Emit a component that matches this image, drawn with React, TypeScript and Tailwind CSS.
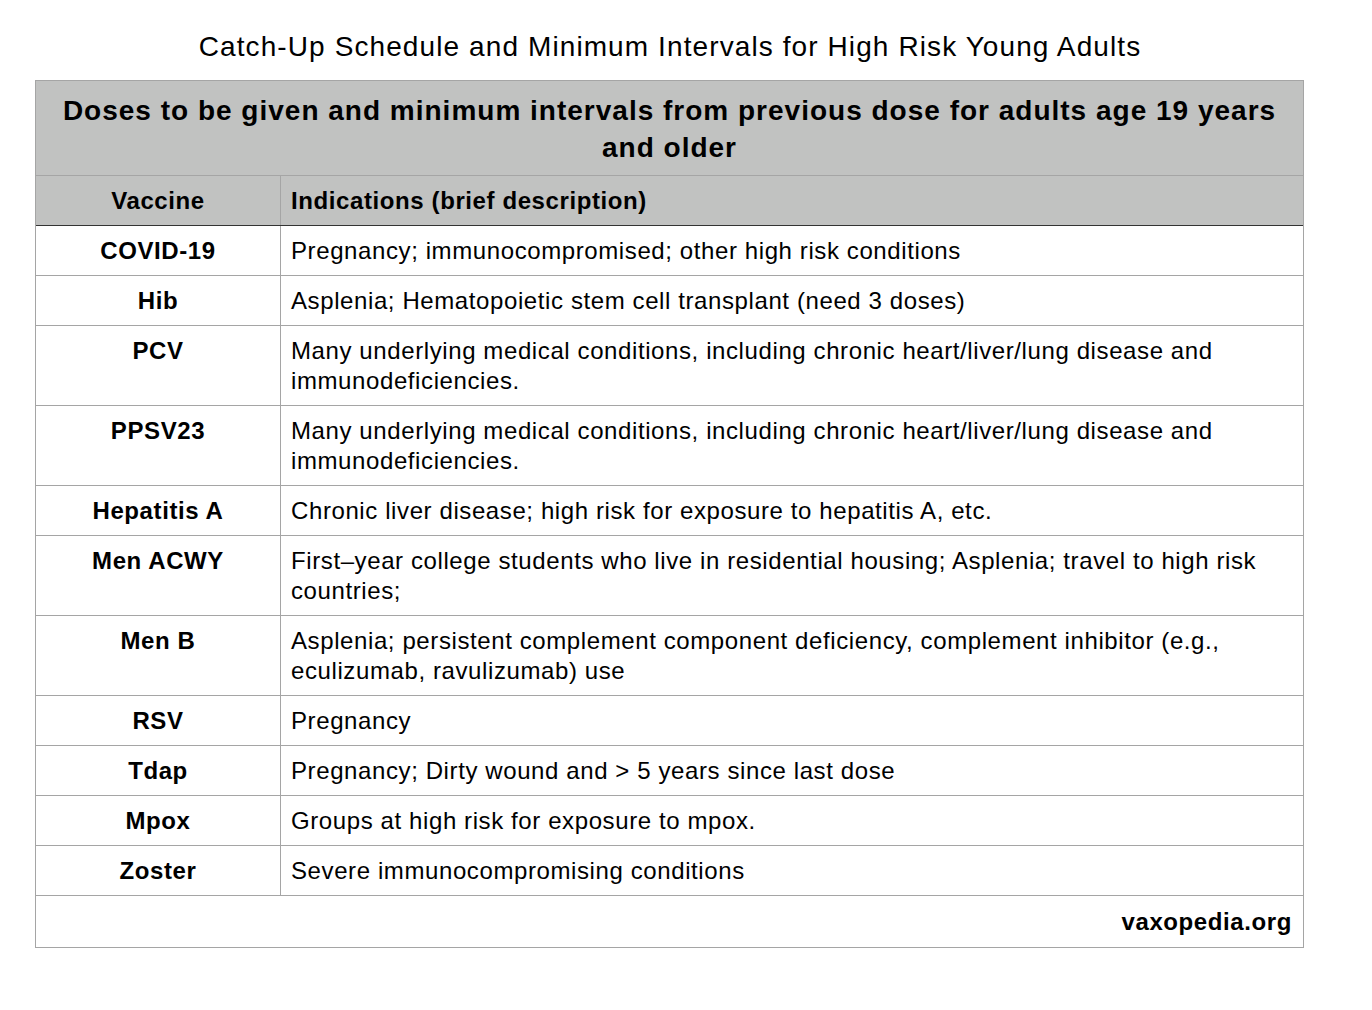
import React from "react";

const rows: [string, string][] = [
  ["COVID-19", "Pregnancy; immunocompromised; other high risk conditions"],
  ["Hib", "Asplenia; Hematopoietic stem cell transplant (need 3 doses)"],
  ["PCV", "Many underlying medical conditions, including chronic heart/liver/lung disease and immunodeficiencies."],
  ["PPSV23", "Many underlying medical conditions, including chronic heart/liver/lung disease and immunodeficiencies."],
  ["Hepatitis A", "Chronic liver disease; high risk for exposure to hepatitis A, etc."],
  ["Men ACWY", "First\u2013year college students who live in residential housing; Asplenia; travel to high risk countries;"],
  ["Men B", "Asplenia; persistent complement component deficiency, complement inhibitor (e.g., eculizumab, ravulizumab) use"],
  ["RSV", "Pregnancy"],
  ["Tdap", "Pregnancy; Dirty wound and > 5 years since last dose"],
  ["Mpox", "Groups at high risk for exposure to mpox."],
  ["Zoster", "Severe immunocompromising conditions"],
];

export default function App() {
  return (
    <div
      className="w-[1372px] h-[1010px] bg-white text-black"
      style={{ fontFamily: '"Liberation Sans", Arial, sans-serif' }}
    >
      <div className="pt-[30px] h-[80px] text-center text-[28px] leading-[34px] tracking-[1.1px] pr-[32px]">
        Catch-Up Schedule and Minimum Intervals for High Risk Young Adults
      </div>
      <div className="ml-[35px] w-[1269px] border border-[#a5a5a5]">
        <div className="bg-[#c1c2c1] text-center font-bold text-[28px] leading-[37px] tracking-[1px] pt-[11px] pb-[9px] px-[10px]">
          Doses to be given and minimum intervals from previous dose for adults age 19 years
          <br />
          and older
        </div>
        <div className="flex bg-[#c1c2c1] border-t border-[#a5a5a5] border-b border-b-[#333333] text-[24px] leading-[30px] tracking-[0.6px] font-bold">
          <div className="w-[245px] shrink-0 text-center pt-[10px] pb-[9px] border-r border-[#a5a5a5]">Vaccine</div>
          <div className="flex-1 pl-[10px] pt-[10px] pb-[9px]">Indications (brief description)</div>
        </div>
        {rows.map(([v, d], i) => (
          <div key={i} className="flex text-[24px] leading-[30px] tracking-[0.6px] border-b border-[#a5a5a5]">
            <div className="w-[245px] shrink-0 text-center font-bold pt-[10px] pb-[9px] border-r border-[#a5a5a5]">
              {v}
            </div>
            <div className="flex-1 pl-[10px] pr-[8px] pt-[10px] pb-[9px]">{d}</div>
          </div>
        ))}
        <div className="text-right font-bold text-[24px] leading-[30px] tracking-[0.6px] pt-[11px] pb-[10px] pr-[11px]">
          vaxopedia.org
        </div>
      </div>
    </div>
  );
}
